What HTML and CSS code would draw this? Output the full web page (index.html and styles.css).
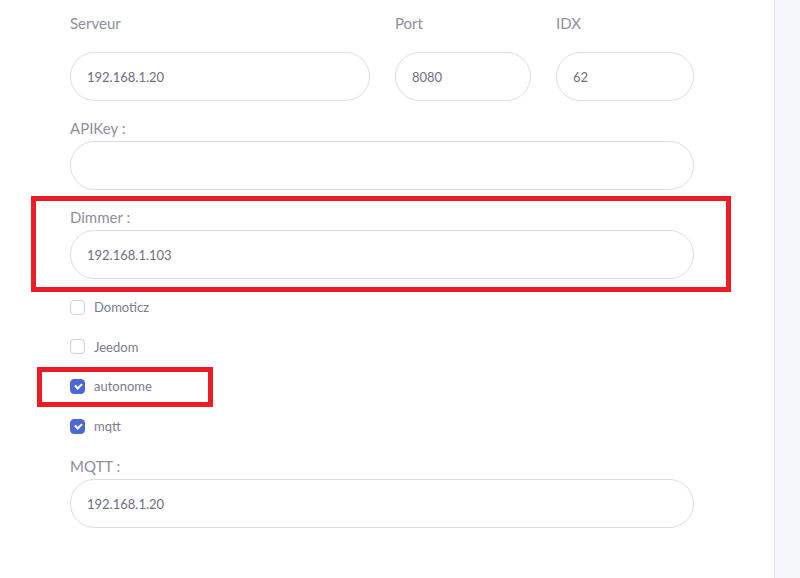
FILE: index.html
```html
<!DOCTYPE html>
<html lang="fr">

<head>
    <meta charset="UTF-8">
    <meta name="viewport" content="width=device-width, initial-scale=1.0">
    <title>Configuration</title>
    <link rel="stylesheet" href="styles.css">
</head>

<body>

    <div class="page">
        <div class="main">
            <form class="config">
                <div class="row-server">
                    <div class="field">
                        <label class="top-label">Serveur</label>
                        <input class="pill" type="text" value="192.168.1.20">
                    </div>
                    <div class="field">
                        <label class="top-label">Port</label>
                        <input class="pill" type="text" value="8080">
                    </div>
                    <div class="field">
                        <label class="top-label">IDX</label>
                        <input class="pill" type="text" value="62">
                    </div>
                </div>

                <div class="field block">
                    <label>APIKey :</label>
                    <input class="pill" type="text" value="">
                </div>

                <div class="field block">
                    <label>Dimmer :</label>
                    <input class="pill" type="text" value="192.168.1.103">
                </div>

                <div class="checks">
                    <label class="check"><span class="box"></span>Domoticz</label>
                    <label class="check"><span class="box"></span>Jeedom</label>
                    <label class="check"><span class="box on"></span>autonome</label>
                    <label class="check"><span class="box on"></span>mqtt</label>
                </div>

                <div class="field block">
                    <label>MQTT :</label>
                    <input class="pill" type="text" value="192.168.1.20">
                </div>
            </form>

            <!-- annotations -->
            <div class="mark mark-dimmer"></div>
            <div class="mark mark-auto"></div>
        </div>
        <div class="sidebar"></div>
    </div>

</body>

</html>
```

FILE: styles.css
```css
body {
    margin: 0;
    font-family: Lato, "Open Sans", sans-serif;
    background-color: #fff;
    color: #8e8e9e;
}

.page {
    display: flex;
    height: 578px;
    overflow: hidden;
}

.main {
    position: relative;
    flex: 1;
    padding: 13px 0 0 70px;
}

.sidebar {
    width: 25px;
    background-color: #f6f7fb;
    border-left: 1px solid #e6e8f1;
}

.config {
    width: 624px;
}

.row-server {
    display: grid;
    grid-template-columns: 300px 136px 138px;
    column-gap: 25px;
}

.field label {
    display: block;
    font-size: 15px;
    line-height: 20px;
    color: #8e8e9e;
    margin-bottom: 2px;
}

.field .top-label {
    margin-bottom: 19px;
}

.block {
    margin-top: 17px;
}

.block + .block {
    margin-top: 17px;
}

.block label {
    margin-bottom: 3px;
}

.pill {
    box-sizing: border-box;
    display: block;
    width: 100%;
    height: 49px;
    padding: 0 16px;
    border: 1px solid #dcdce8;
    border-radius: 25px;
    font-family: inherit;
    font-size: 13px;
    color: #6e6e80;
    background-color: #fff;
    outline: none;
}

.checks {
    display: flex;
    flex-direction: column;
    gap: 19.7px;
    margin-top: 18px;
}

.check {
    display: flex;
    align-items: center;
    height: 20px;
    font-size: 13px;
    color: #7c7c8e;
}

.box {
    box-sizing: border-box;
    width: 15px;
    height: 15px;
    margin-right: 9px;
    border: 1px solid #cfd0dc;
    border-radius: 4px;
    background-color: #fff;
    position: relative;
}

.box.on {
    background-color: #4d68d6;
    border-color: #4d68d6;
}

.box.on::after {
    content: "";
    position: absolute;
    left: 4px;
    top: 3px;
    width: 5px;
    height: 3px;
    border-left: 2px solid #fff;
    border-bottom: 2px solid #fff;
    transform: rotate(-45deg);
}

.checks + .block {
    margin-top: 20px;
}

.mark {
    position: absolute;
    box-sizing: border-box;
    border: 5px solid #ec1c24;
}

.mark-dimmer {
    left: 31px;
    top: 196px;
    width: 700px;
    height: 96px;
}

.mark-auto {
    left: 37px;
    top: 367px;
    width: 176px;
    height: 40px;
}
```
